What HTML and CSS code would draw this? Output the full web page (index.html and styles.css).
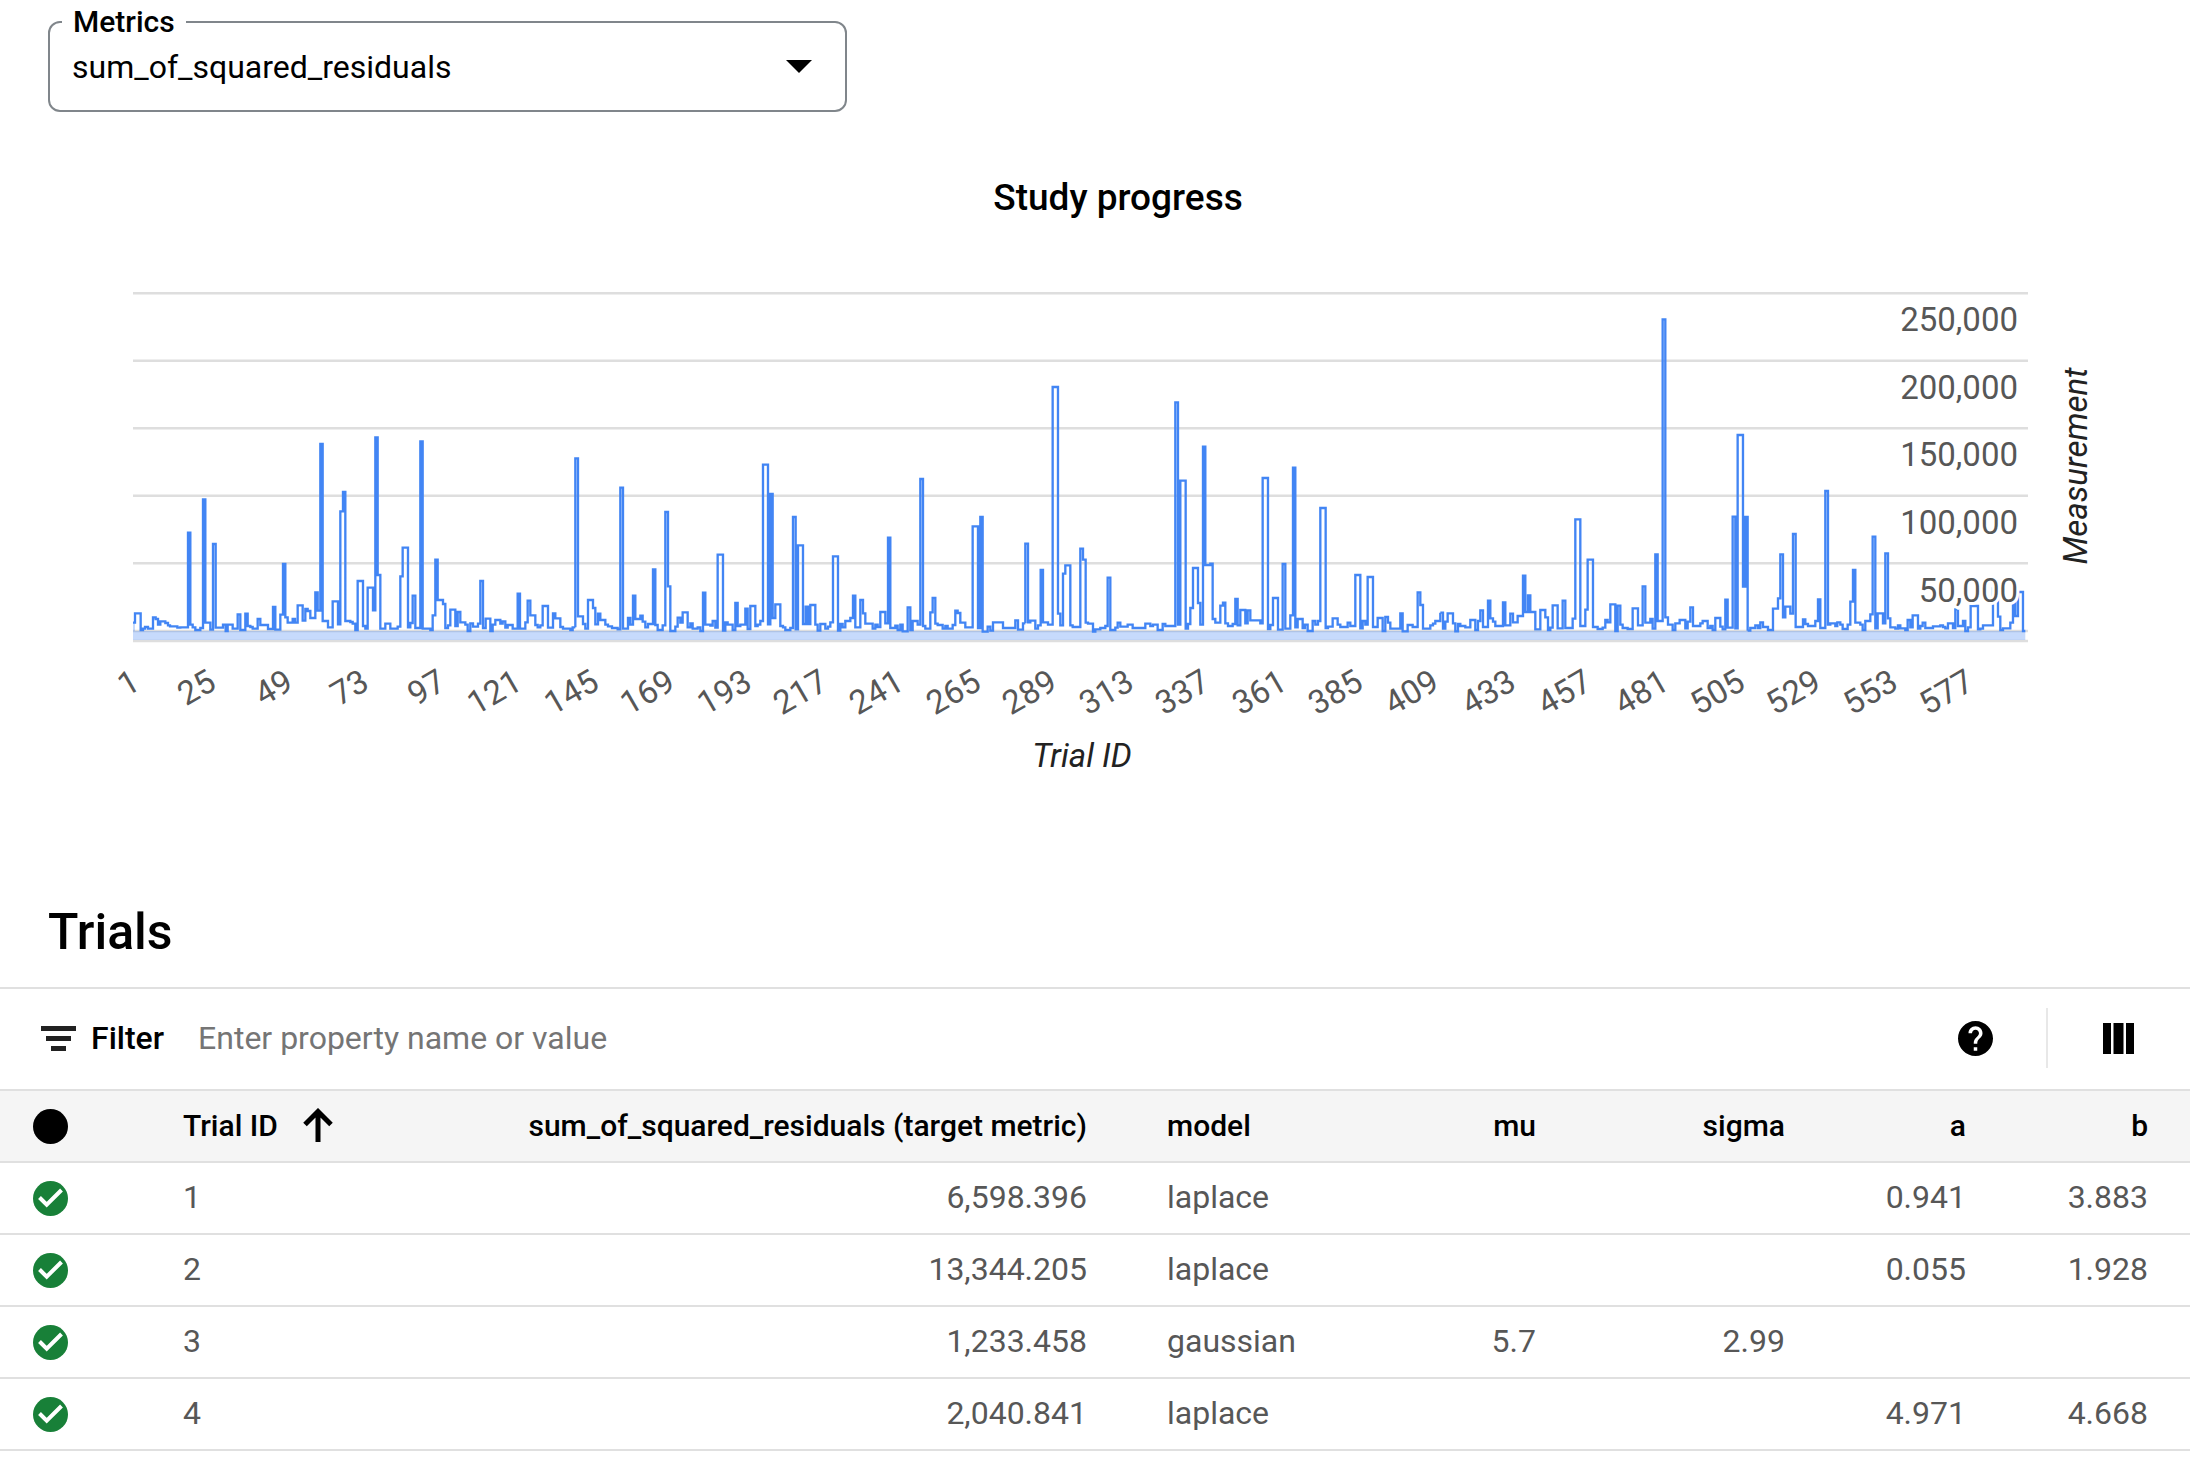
FILE: index.html
```html
<!DOCTYPE html>
<html lang="en">
<head>
<meta charset="utf-8">
<meta name="viewport" content="width=device-width, initial-scale=1">
<title>Study progress</title>
<link rel="stylesheet" href="styles.css">
</head>
<body>
<main>
<fieldset class="metric-field">
  <legend><label for="metric">Metrics</label></legend>
  <div class="metric-select">
    <select id="metric"><option>sum_of_squared_residuals</option></select>
    <svg class="metric-arrow" viewBox="0 0 26 13" aria-hidden="true"><path d="M0 0H26L13 13Z"/></svg>
  </div>
</fieldset>

<svg class="chart" viewBox="0 112 2190 788" role="img" aria-label="Study progress by trial">
  <text class="chart-title" x="1118" y="210">Study progress</text>
  <g class="grid">
    <path d="M133 293.2H2028M133 360.800H2028M133 428.2H2028M133 495.800H2028M133 563.2H2028M133 631H2028M133 641H2028"/>
  </g>
  <path class="area" d="M133 622.7H135V631H2025.300V640H133Z"/>
  <g class="series" transform="translate(120 280) scale(.33333)">
    <path d="M39 1028H45V1000H62V1050H69V1046H75V1041H84V1046H99V1012H107V1017H114V1034H121V1024H136V1029H144V1036H150V1039H172V1043H181V1042H204V758H211V1034H218V1042H226V1050H241V1044H249V658H256V1028H271V1049H279V792H287V1043H309V1034H317V1053H323V1034H338V1046H353V1003H361V1050H376V1001H383V1038H391V1041H398V1046H413V1017H421V1035H444V1047H459V981H466V1049H481V1004H489V852H496V1012H503V1028H518V1017H525V1028H533V976H548V1022H556V987H563V993H571V1014H586V937H593V992H601V492H608V1023H624V1042H638V964H654V1033H661V694H669V636H676V1023H691V1026H698V1031H706V1050H713V903H729V1038H736V1046H743V923H759V991H766V472H773V885H781V1046H796V1031H811V1046H833V1040H841V889H848V803H864V1042H871V1029H878V947H886V1044H901V484H908V1046H931V1050H938V1006H946V839H953V960H969V972H976V1044H984V1036H991V989H1006V1038H1013V996H1021V1027H1036V1034H1043V1053H1051V1030H1059V1040H1074V1031H1081V903H1089V1044H1097V1016H1111V1053H1118V1034H1126V1020H1141V1031H1148V1024H1156V1043H1163V1035H1178V1046H1193V941H1200V1046H1216V1027H1223V962H1231V1006H1246V1035H1253V1042H1261V1036H1268V978H1284V1043H1299V1000H1306V1015H1321V1041H1329V1046H1351V1050H1358V1042H1366"/>
    <path transform="translate(1320)" d="M46 1042V535H54V1009H69V1032H76V1046H84V960H99V984H106V1033H114V1001H121V1020H136V1034H144V1039H156V1044H173V1048H181V623H189V1046H204V1014H211V1034H219V947H226V1017H241V1007H248V1025H256V1042H264V1032H279V868H286V1035H293V1050H308V1036H316V696H324V919H331V1053H346V1040H353V1013H361V1028H368V997H383V1042H391V1030H398V1046H413V1042H421V1053H429V938H436V1034H451V1037H458V1023H466V1043H473V824H489V1052H496V1027H503V1034H518V1050H526V969H533V1038H541V1034H556V986H563V1047H571V978H586V1038H593V1034H601V1023H609V554H624V1033H631V642H638V1014H646V973H661V1038H669V1042H676V1050H691V1044H699V711H707V1048H714V796H729V1032H737V980H744V1032H751V975H766V1034H773V1052H781V1032H796V1046H804V1040H811V1027H819V829H834V1052H841V1032H848V1042H856V1023H871V1014H879V947H886V1042H901V960H909V1000H916V1031H938V1046H946V1034H953V1041H961V996H976V1030H984V773H991V1044H1006V1037H1013V1050H1021V1034H1028V1054H1043V982H1051V1050H1058V1023H1073V1034H1081V597H1089V1038H1096V1046H1111V997H1118V954H1126V1031H1133V1035H1148V1046H1156V1038H1163V1046H1178V1035H1186V992H1193V999H1201V1028H1216V1042H1238V739H1254V1044H1261V711H1268V1055H1283V1040H1291V1052H1299V1027H1329V1044H1366V1021H1374V1049H1389V1030H1396"/>
    <path transform="translate(2640)" d="M76 1030V791H84V1027H91V1022H106V1046H114V1036H122V870H129V1027H144V1034H158V321H174V1001H181V1036H189V881H196V856H211V1036H218V1041H241V806H249V839H257V1028H264V1031H279V1055H286V1048H301V1044H316V1038H323V893H331V1050H346V1043H353V1028H361V1040H383V1034H398V1044H436V1031H451V1038H459V1034H473V1050H488V1032H496V1038H526V367H534V1034H541V602H557V1046H564V1032H571V984H579V864H594V969H601V1034H609V500H616V855H631V851H638V1017H646V1028H661V977H669V968H676V1030H684V1038H698V1032H706V957H713V1036H721V990H736V1030H743V991H751V1021H781V1030H788V594H804V1047H811V1035H819V954H834V1049H848V852H856V1046H871V1006H879V563H886V1042H893V1017H908V1044H915V1034H923V1053H938V1023H946V1034H954V1023H961V684H977V1044H984V1040H998V1015H1013V1034H1021V1041H1043V1028H1051V1038H1066V885H1081V1045H1088V1023H1096V1034H1103V891H1119V1041H1133V1014H1148V1053H1156V1011H1164V1028H1171V1046H1201V1000H1208V1054H1223V1035H1238V1041H1253V937H1261V975H1269V1046H1291V1036H1299V1031H1306V1023H1321V998"/>
    <path transform="translate(3960)" d="M1 998H9V1046H16V1025H23V1000H39V1030H46V1054H54V1032H61V1038H76V1042H91V1020H106V1050H114V1023H121V991H129V1041H144V962H151V1015H159V1025H166V1038H189V967H196V1036H211V1001H219V1027H233V1008H249V887H256V996H264V946H271V996H286V1048H301V990H316V1012H324V1050H331V1043H338V976H353V1045H368V962H376V1044H398V1016H406V718H421V1038H436V989H443V839H459V1041H473V1047H488V1043H496V1020H503V1027H511V973H526V1053H533V977H541V1034H548V1044H563V1047H578V985H594V1036H608V919H616V1028H631V1017H638V1046H646V823H653V1023H668V118H676V1012H684V1034H698V1050H706V1030H719V1020H736V1045H743V1025H751V982H759V1038H781V1030H788V1023H803V1044H811V1038H818V1050H826V1014H841V1040H848V1048H856V959H863V1043H878V710H886V1045H893V465H909V920H916V711H923V1052"/>
    <path transform="translate(4860)" d="M23 1052H31V1044H46V1036H54V1044H61V1027H69V1041H84V1050H99V986H114V955H121V823H129V1012H136V980H151V1001H159V762H167V1041H189V1018H196V1032H204V1038H226V1023H234V958H241V1044H256V633H264V1034H271V1030H286V1038H292V1027H301V1034H308V1047H323V1034H331V965H339V870H346V1028H361V1034H368V1050H376V1023H391V1003H398V770H406V1045H413V1000H429V1030H436V820H444V1015H451V1042H466V1046H474V1036H481V1045H496V1050H503V1020H511V1042H518V1006H534V1046H541V1038H548V1028H556V1044H579V1039H601V1036H609V1041H616V1045H624V1030H639V1044H646V988H654V1038H669V1023H676V1053H684V1042H692V978H714V1048H721V1046H729V1036H759V925H774V1010H781V1050H789V1045H811V1028H819V960H826V1008H834V936H849V1053H856"/>
  </g>
  <g class="y-ticks">
    <text x="2018" y="331">250,000</text>
    <text x="2018" y="399">200,000</text>
    <text x="2018" y="466">150,000</text>
    <text x="2018" y="534">100,000</text>
    <text x="2018" y="602">50,000</text>
  </g>
  <g class="x-ticks">
    <text transform="translate(142 688) rotate(-30)">1</text>
    <text transform="translate(218 688) rotate(-30)">25</text>
    <text transform="translate(295 688) rotate(-30)">49</text>
    <text transform="translate(371 688) rotate(-30)">73</text>
    <text transform="translate(448 688) rotate(-30)">97</text>
    <text transform="translate(524 688) rotate(-30)">121</text>
    <text transform="translate(601 688) rotate(-30)">145</text>
    <text transform="translate(677 688) rotate(-30)">169</text>
    <text transform="translate(754 688) rotate(-30)">193</text>
    <text transform="translate(830 688) rotate(-30)">217</text>
    <text transform="translate(906 688) rotate(-30)">241</text>
    <text transform="translate(983 688) rotate(-30)">265</text>
    <text transform="translate(1059 688) rotate(-30)">289</text>
    <text transform="translate(1136 688) rotate(-30)">313</text>
    <text transform="translate(1212 688) rotate(-30)">337</text>
    <text transform="translate(1289 688) rotate(-30)">361</text>
    <text transform="translate(1365 688) rotate(-30)">385</text>
    <text transform="translate(1441 688) rotate(-30)">409</text>
    <text transform="translate(1518 688) rotate(-30)">433</text>
    <text transform="translate(1594 688) rotate(-30)">457</text>
    <text transform="translate(1671 688) rotate(-30)">481</text>
    <text transform="translate(1747 688) rotate(-30)">505</text>
    <text transform="translate(1823 688) rotate(-30)">529</text>
    <text transform="translate(1900 688) rotate(-30)">553</text>
    <text transform="translate(1976 688) rotate(-30)">577</text>
  </g>
  <text class="axis-title" x="1082" y="767">Trial ID</text>
  <text class="axis-title" transform="translate(2087 466) rotate(-90)">Measurement</text>
</svg>

<section class="trials">
  <h2>Trials</h2>
  <div class="toolbar">
    <svg class="filter-icon" viewBox="0 0 35 25" aria-hidden="true"><path d="M0 0H35V5H0ZM5 10H30V15H5ZM10 20H25V25H10Z"/></svg>
    <label for="filter">Filter</label>
    <input id="filter" type="text" placeholder="Enter property name or value">
    <button class="help" type="button" aria-label="Help">
      <svg viewBox="2 2 20 20"><path d="M12 2C6.480 2 2 6.480 2 12s4.480 10 10 10 10-4.480 10-10S17.520 2 12 2zm1 17h-2v-2h2v2zm2.070-7.750l-.9.920C13.450 12.900 13 13.500 13 15h-2v-.5c0-1.100.45-2.100 1.170-2.830l1.240-1.260c.37-.36.59-.86.59-1.410 0-1.100-.9-2-2-2s-2 .9-2 2H8c0-2.210 1.790-4 4-4s4 1.790 4 4c0 .88-.36 1.680-.93 2.250z"/></svg>
    </button>
    <button class="columns" type="button" aria-label="Columns">
      <svg viewBox="0 0 31 31"><path d="M0 0H8V31H0ZM10.500 0H20.500V31H10.500ZM23 0H31V31H23Z"/></svg>
    </button>
  </div>
  <table>
    <colgroup>
      <col class="c-status"><col class="c-id"><col><col class="c-model"><col class="c-mu"><col class="c-sigma"><col class="c-a"><col class="c-b">
    </colgroup>
    <thead>
      <tr>
        <th class="status"><svg viewBox="0 0 35 35" aria-label="Status"><circle cx="17.500" cy="17.500" r="17.500"/></svg></th>
        <th class="text"><span class="sorted">Trial ID <svg viewBox="0 0 30 34" aria-label="Sorted ascending"><path d="M15 34V3M2 16.500L15 3.500L28 16.500"/></svg></span></th>
        <th>sum_of_squared_residuals (target metric)</th>
        <th class="text">model</th>
        <th>mu</th>
        <th>sigma</th>
        <th>a</th>
        <th>b</th>
      </tr>
    </thead>
    <tbody>
      <tr>
        <td class="status"><svg viewBox="0 0 35 35" aria-label="Succeeded"><circle cx="17.500" cy="17.500" r="17.500"/><path d="M6.500 16.500L13.700 23.700L28.500 9"/></svg></td>
        <td class="text">1</td><td>6,598.396</td><td class="text">laplace</td><td></td><td></td><td>0.941</td><td>3.883</td>
      </tr>
      <tr>
        <td class="status"><svg viewBox="0 0 35 35" aria-label="Succeeded"><circle cx="17.500" cy="17.500" r="17.500"/><path d="M6.500 16.500L13.700 23.700L28.500 9"/></svg></td>
        <td class="text">2</td><td>13,344.205</td><td class="text">laplace</td><td></td><td></td><td>0.055</td><td>1.928</td>
      </tr>
      <tr>
        <td class="status"><svg viewBox="0 0 35 35" aria-label="Succeeded"><circle cx="17.500" cy="17.500" r="17.500"/><path d="M6.500 16.500L13.700 23.700L28.500 9"/></svg></td>
        <td class="text">3</td><td>1,233.458</td><td class="text">gaussian</td><td>5.7</td><td>2.99</td><td></td><td></td>
      </tr>
      <tr>
        <td class="status"><svg viewBox="0 0 35 35" aria-label="Succeeded"><circle cx="17.500" cy="17.500" r="17.500"/><path d="M6.500 16.500L13.700 23.700L28.500 9"/></svg></td>
        <td class="text">4</td><td>2,040.841</td><td class="text">laplace</td><td></td><td></td><td>4.971</td><td>4.668</td>
      </tr>
    </tbody>
  </table>
</section>
</main>
</body>
</html>
```
FILE: styles.css
```css
* { box-sizing: border-box; }

body {
  margin: 0;
  background: #fff;
  color: #000;
  font-family: Roboto, "Liberation Sans", sans-serif;
  font-size: 32px;
}

.metric-field {
  width: 799px;
  max-width: calc(100% - 96px);
  margin: 0 48px;
  padding: 0;
  border: 2px solid #80868b;
  border-radius: 12px;
}
.metric-field legend {
  margin-left: 12px;
  padding: 0 11px;
  font-size: 30px;
  font-weight: 500;
  line-height: 44px;
}
.metric-select { position: relative; }
.metric-select select {
  display: block;
  width: 100%;
  height: 66px;
  padding: 0 72px 20px 22px;
  border: 0;
  background: none;
  color: #000;
  font: inherit;
  appearance: none;
}
.metric-arrow {
  position: absolute;
  top: 16px;
  right: 33px;
  width: 26px;
  height: 13px;
  pointer-events: none;
}

.chart { display: block; width: 100%; }
.chart text { font-size: 33px; }
.chart .chart-title { font-size: 37px; font-weight: 500; text-anchor: middle; }
.grid { fill: none; stroke: #dedede; stroke-width: 2.4; }
.area { fill: #4285f4; fill-opacity: .3; }
.series { fill: none; stroke: #4285f4; stroke-width: 7; }
.y-ticks, .x-ticks { fill: #575757; text-anchor: end; }
.y-ticks { stroke: #fff; stroke-width: 6; paint-order: stroke; }
.axis-title { fill: #222; font-style: italic; text-anchor: middle; }

.trials h2 {
  margin: 0;
  padding: 0 48px;
  height: 87px;
  font-size: 50px;
  font-weight: 500;
  line-height: 64px;
}
.toolbar {
  display: flex;
  align-items: center;
  height: 104px;
  padding: 0 0 2px 41px;
  border-top: 2px solid #e0e0e0;
  border-bottom: 2px solid #e0e0e0;
}
.filter-icon { width: 35px; height: 25px; margin-right: 15px; fill: #212121; }
.toolbar label { font-weight: 500; }
.toolbar input {
  flex: 1;
  min-width: 0;
  margin-left: 34px;
  padding: 0;
  border: 0;
  color: #000;
  font: inherit;
}
.toolbar input::placeholder { color: #757575; opacity: 1; }
.toolbar button {
  display: flex;
  align-items: center;
  height: 60px;
  padding: 0;
  border: 0;
  background: none;
}
.toolbar .help { padding-right: 53px; border-right: 2px solid #e8e8e8; }
.toolbar .columns { padding: 0 56px 0 55px; }
.help svg { width: 35px; height: 35px; }
.columns svg { width: 31px; height: 31px; }

table { width: 100%; border-collapse: separate; border-spacing: 0; table-layout: fixed; }
.c-status { width: 143px; }
.c-id { width: 300px; }
.c-model { width: 300px; }
.c-mu { width: 149px; }
.c-sigma { width: 249px; }
.c-a { width: 181px; }
.c-b { width: 184px; }
th, td {
  height: 72px;
  padding: 0 40px 2px;
  border-bottom: 2px solid #e0e0e0;
  text-align: right;
  white-space: nowrap;
}
th { background: #f5f5f5; font-size: 30px; font-weight: 500; }
td { color: #575757; }
th:last-child, td:last-child { padding-right: 42px; }
.text { text-align: left; }
.status { padding: 0 0 0 33px; text-align: left; }
.status svg { display: block; width: 35px; height: 35px; }
td.status circle { fill: #188038; }
td.status path { fill: none; stroke: #fff; stroke-width: 4; }
.sorted { display: flex; align-items: center; gap: 25px; }
.sorted svg { width: 30px; height: 34px; fill: none; stroke: #000; stroke-width: 5; }
```
